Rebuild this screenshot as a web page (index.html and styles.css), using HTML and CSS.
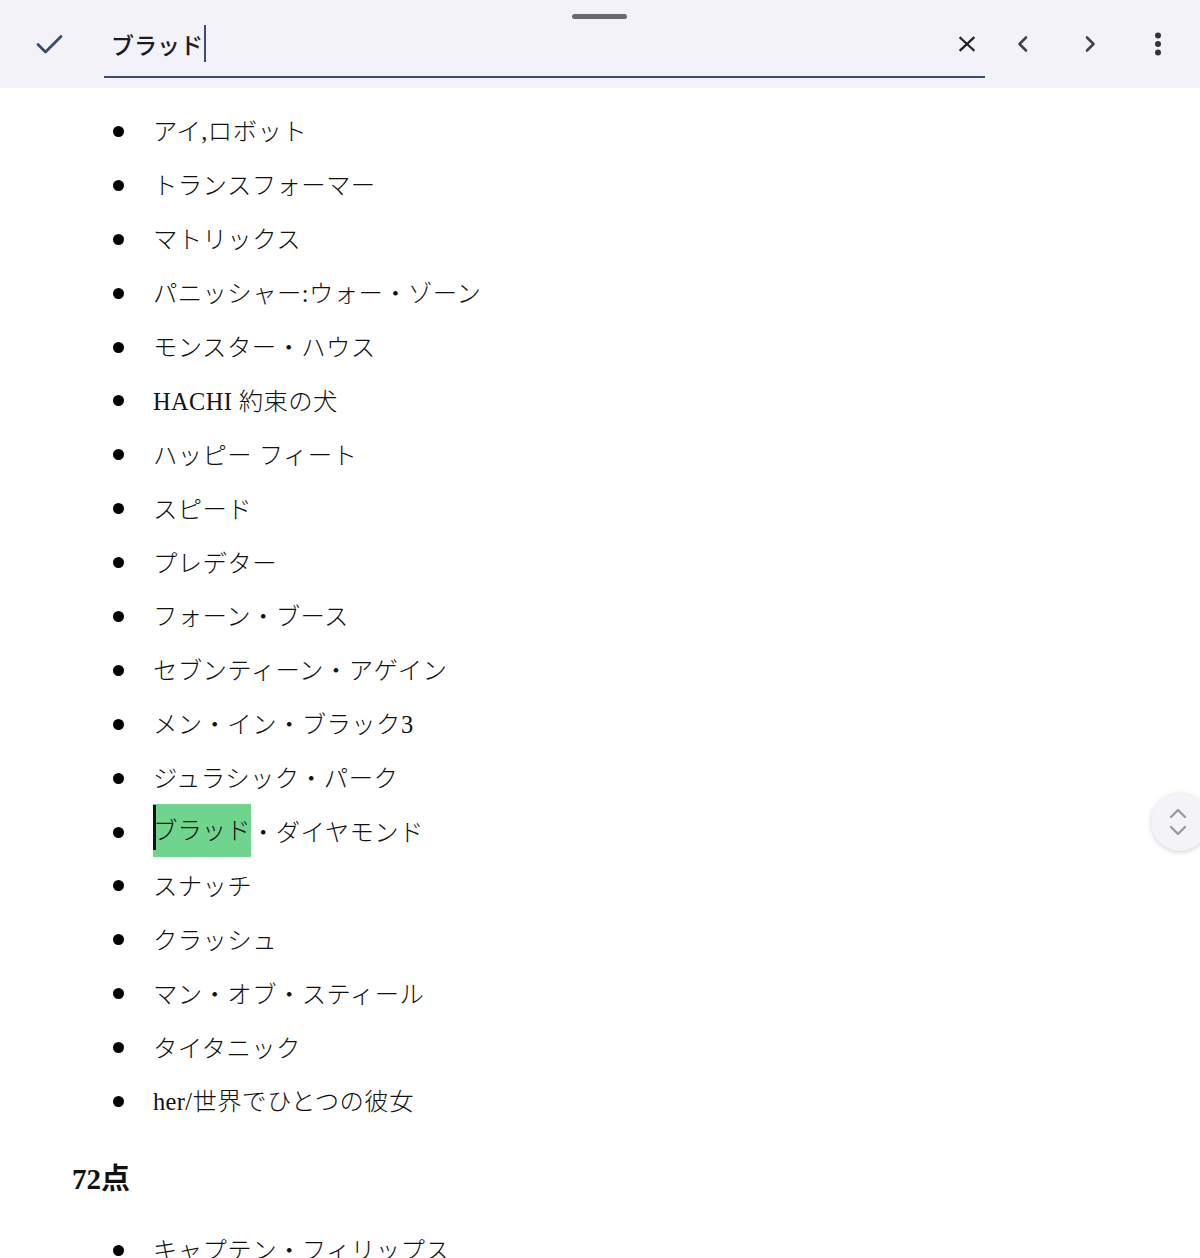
FILE: index.html
```html
<!DOCTYPE html>
<html lang="ja">
<head>
<meta charset="utf-8">
<title>検索</title>
<link rel="stylesheet" href="styles.css">
</head>
<body>
<header class="findbar">
  <div class="handle"></div>
  <button class="icon-btn check-btn" aria-label="完了">
    <svg width="32" height="32" viewBox="0 0 32 32"><polyline points="5,16.5 12.5,24 28,8.5" fill="none" stroke="#3c4a6b" stroke-width="2.8" stroke-linecap="round" stroke-linejoin="round"/></svg>
  </button>
  <div class="field">
    <span class="query">ブラッド</span><span class="caret"></span>
    <span class="spacer"></span>
    <button class="icon-btn clear-btn" aria-label="クリア">
      <svg width="20" height="20" viewBox="0 0 20 20"><path d="M3.5 4 L16.5 16 M16.5 4 L3.5 16" stroke="#222" stroke-width="2.3" stroke-linecap="square" fill="none"/></svg>
    </button>
  </div>
  <button class="icon-btn prev-btn" aria-label="前へ">
    <svg width="20" height="20" viewBox="0 0 20 20"><polyline points="13,3.5 6.5,10 13,16.5" fill="none" stroke="#444" stroke-width="2.6" stroke-linecap="round" stroke-linejoin="round"/></svg>
  </button>
  <button class="icon-btn next-btn" aria-label="次へ">
    <svg width="20" height="20" viewBox="0 0 20 20"><polyline points="7,3.5 13.5,10 7,16.5" fill="none" stroke="#444" stroke-width="2.6" stroke-linecap="round" stroke-linejoin="round"/></svg>
  </button>
  <button class="icon-btn more-btn" aria-label="その他">
    <svg width="20" height="24" viewBox="0 0 20 24"><circle cx="10" cy="3.5" r="3" fill="#333"/><circle cx="10" cy="12" r="3" fill="#333"/><circle cx="10" cy="20.5" r="3" fill="#333"/></svg>
  </button>
</header>

<main class="doc">
  <ul class="list">
    <li><span>アイ,ロボット</span></li>
    <li><span>トランスフォーマー</span></li>
    <li><span>マトリックス</span></li>
    <li><span>パニッシャー:ウォー・ゾーン</span></li>
    <li><span>モンスター・ハウス</span></li>
    <li><span>HACHI 約束の犬</span></li>
    <li><span>ハッピー フィート</span></li>
    <li><span>スピード</span></li>
    <li><span>プレデター</span></li>
    <li><span>フォーン・ブース</span></li>
    <li><span>セブンティーン・アゲイン</span></li>
    <li><span>メン・イン・ブラック3</span></li>
    <li><span>ジュラシック・パーク</span></li>
    <li><span class="hl">ブラッド</span><span>・ダイヤモンド</span></li>
    <li><span>スナッチ</span></li>
    <li><span>クラッシュ</span></li>
    <li><span>マン・オブ・スティール</span></li>
    <li><span>タイタニック</span></li>
    <li><span>her/世界でひとつの彼女</span></li>
  </ul>
  <h2 class="score">72点</h2>
  <ul class="list">
    <li><span>キャプテン・フィリップス</span></li>
  </ul>
</main>

<button class="scroll-fab" aria-label="スクロール">
  <svg width="24" height="36" viewBox="0 0 24 36"><polyline points="5,13 12,6 19,13" fill="none" stroke="#9a9aa0" stroke-width="2.4" stroke-linecap="round" stroke-linejoin="round"/><polyline points="5,23 12,30 19,23" fill="none" stroke="#9a9aa0" stroke-width="2.4" stroke-linecap="round" stroke-linejoin="round"/></svg>
</button>
</body>
</html>
```

FILE: styles.css
```css
html, body {
  margin: 0;
  padding: 0;
  background: #ffffff;
  overflow: hidden;
  height: 1258px;
}

body {
  font-family: "Liberation Serif", "Noto Sans CJK JP", serif;
  color: #111;
}

.findbar {
  position: relative;
  height: 88px;
  background: #f2f2f8;
  display: flex;
  align-items: flex-start;
  padding-top: 12px;
  box-sizing: border-box;
}

.handle {
  position: absolute;
  left: 572px;
  top: 14px;
  width: 55px;
  height: 5px;
  border-radius: 3px;
  background: #6a6a6e;
}

.icon-btn {
  border: 0;
  background: transparent;
  padding: 0;
  margin: 0;
  height: 64px;
  display: flex;
  align-items: center;
  justify-content: center;
  cursor: pointer;
}

.check-btn {
  width: 48px;
  margin-left: 25px;
  margin-right: 31px;
}

.field {
  width: 881px;
  height: 66px;
  box-sizing: border-box;
  border-bottom: 2.5px solid #3d4b78;
  display: flex;
  align-items: flex-start;
  padding-left: 7px;
}

.field .icon-btn {
  height: 64px;
}

.query {
  font-family: "Noto Sans CJK JP", "Noto Sans", sans-serif;
  font-size: 23px;
  font-weight: 500;
  color: #1c1c1e;
  line-height: 64px;
}

.caret {
  width: 2px;
  height: 37px;
  background: #3d4b78;
  margin-left: 1px;
  margin-top: 13px;
}

.spacer {
  flex: 1;
}

.clear-btn {
  width: 36px;
}

.prev-btn {
  width: 48px;
  margin-left: 14px;
}

.next-btn {
  width: 48px;
  margin-left: 19px;
}

.more-btn {
  width: 48px;
  margin-left: 20px;
}

.doc {
  padding: 15px 0 0 72px;
}

.list {
  list-style: none;
  margin: 0;
  padding: 0;
}

.list li {
  display: flex;
  align-items: center;
  height: 53.9px;
  font-size: 24.4px;
  font-weight: 300;
  letter-spacing: 0.4px;
  white-space: nowrap;
}

.list li::before {
  content: "";
  width: 11px;
  height: 11px;
  border-radius: 50%;
  background: #000;
  margin-left: 41px;
  margin-right: 29px;
  margin-top: 3px;
  flex: none;
}

.hl {
  position: relative;
  display: inline-block;
  line-height: 53px;
  height: 53px;
  width: 98px;
  background: #6fd48d;
  letter-spacing: 0;
}

.hl::before {
  content: "";
  position: absolute;
  left: 0;
  top: 1px;
  width: 3px;
  height: 45px;
  background: #111;
}

.score {
  margin: 32px 0 23px 0;
  height: 40px;
  line-height: 40px;
  font-size: 29px;
  font-weight: 700;
  color: #111;
}

.scroll-fab {
  position: absolute;
  left: 1151px;
  top: 793px;
  width: 58px;
  height: 58px;
  border-radius: 50%;
  border: 0;
  padding: 0;
  background: #f4f4f8;
  box-shadow: 0 1px 5px rgba(0, 0, 0, 0.18);
  display: flex;
  align-items: center;
  justify-content: center;
}

.scroll-fab svg {
  margin-left: -4px;
}
```
